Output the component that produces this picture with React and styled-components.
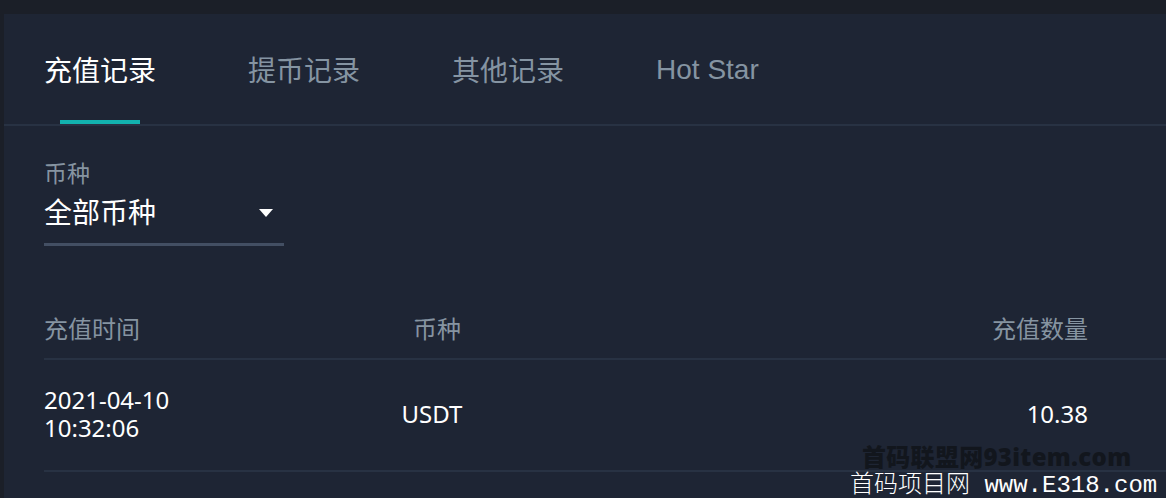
import React from "react";
import styled, { createGlobalStyle } from "styled-components";

const GlobalStyle = createGlobalStyle`
  html, body {
    margin: 0;
    padding: 0;
    background: #1b1f28;
    height: 100%;
    overflow: hidden;
  }
  #root {
    height: 100%;
  }
`;

const SANS = `"Noto Sans", "Noto Sans CJK SC", sans-serif`;

const Page = styled.div`
  position: relative;
  height: 100%;
  box-sizing: border-box;
  padding: 14px 0 0 4px;
  display: flex;
`;

const Panel = styled.div`
  flex: 1;
  background: #1e2534;
  font-family: ${SANS};
  color: #ffffff;
`;

const TabBar = styled.div`
  display: flex;
  gap: 92px;
  padding-left: 40px;
  border-bottom: 2px solid #283243;
`;

const Tab = styled.div`
  position: relative;
  padding: 36px 0 34px;
  font-size: 28px;
  line-height: 40px;
  font-family: ${(p) => (p.$latin ? `"Liberation Sans", Arial, sans-serif` : SANS)};
  color: ${(p) => (p.$active ? "#ffffff" : "#8594a2")};
  white-space: nowrap;

  &::after {
    content: "";
    display: ${(p) => (p.$active ? "block" : "none")};
    position: absolute;
    left: 50%;
    bottom: 0;
    width: 80px;
    height: 4px;
    margin-left: -40px;
    background: #12b2ae;
  }
`;

const Body = styled.div`
  padding: 0 78px 0 40px;
`;

const Filter = styled.div`
  padding-top: 36px;
  width: 240px;
`;

const FilterLabel = styled.div`
  font-size: 23px;
  line-height: 22px;
  color: #8694a1;
  margin-bottom: 6px;
`;

const Select = styled.div`
  display: flex;
  align-items: center;
  justify-content: space-between;
  padding: 2px 11px 11px 0;
  border-bottom: 3px solid #434f63;
  font-size: 28px;
  line-height: 40px;
`;

const Caret = styled.span`
  width: 0;
  height: 0;
  border-left: 7px solid transparent;
  border-right: 7px solid transparent;
  border-top: 8px solid #ffffff;
  margin-top: 2px;
`;

const Table = styled.div`
  margin-top: 54px;
  margin-right: -78px;
`;

const Row = styled.div`
  display: grid;
  grid-template-columns: 300px 180px 1fr;
  align-items: center;
  padding: ${(p) => (p.$head ? "17px 78px 17px 0" : "26px 78px 28px 0")};
  border-bottom: 2px solid #283243;
`;

const Cell = styled.div`
  font-size: 24px;
  line-height: ${(p) => (p.$head ? "24px" : "28px")};
  color: ${(p) => (p.$head ? "#8694a1" : "#ffffff")};
  text-align: ${(p) => p.$align || "left"};
  white-space: pre-line;
  transform: translateX(${(p) => p.$shift || 0}px);
`;

const MarkDark = styled.div`
  position: absolute;
  left: 862px;
  top: 445px;
  font-family: "Open Sans", "Noto Sans CJK SC", sans-serif;
  font-weight: 800;
  font-size: 24px;
  line-height: 24px;
  color: #12161d;
  letter-spacing: 0.3px;
`;

const MarkLight = styled.div`
  position: absolute;
  left: 850px;
  bottom: 0;
  font-family: "Liberation Mono", "Noto Sans CJK SC", monospace;
  font-weight: 300;
  font-size: 24px;
  line-height: 24px;
  color: #ffffff;
  white-space: pre;
`;

const tabs = [
  { label: "充值记录", active: true },
  { label: "提币记录" },
  { label: "其他记录" },
  { label: "Hot Star", latin: true },
];

const records = [{ date: "2021-04-10", time: "10:32:06", coin: "USDT", amount: "10.38" }];

export default function App() {
  return (
    <Page>
      <GlobalStyle />
      <Panel>
        <TabBar>
          {tabs.map((t) => (
            <Tab key={t.label} $active={t.active} $latin={t.latin}>
              {t.label}
            </Tab>
          ))}
        </TabBar>
        <Body>
          <Filter>
            <FilterLabel>币种</FilterLabel>
            <Select>
              <span>全部币种</span>
              <Caret />
            </Select>
          </Filter>
          <Table>
            <Row $head>
              <Cell $head>充值时间</Cell>
              <Cell $head $align="center" $shift={3}>币种</Cell>
              <Cell $head $align="right">充值数量</Cell>
            </Row>
            {records.map((r) => (
              <Row key={r.date + r.time}>
                <Cell>{`${r.date}\n${r.time}`}</Cell>
                <Cell $align="center" $shift={-2}>{r.coin}</Cell>
                <Cell $align="right">{r.amount}</Cell>
              </Row>
            ))}
          </Table>
        </Body>
      </Panel>
      <MarkDark>首码联盟网93item.com</MarkDark>
      <MarkLight>首码项目网 www.E318.com</MarkLight>
    </Page>
  );
}
